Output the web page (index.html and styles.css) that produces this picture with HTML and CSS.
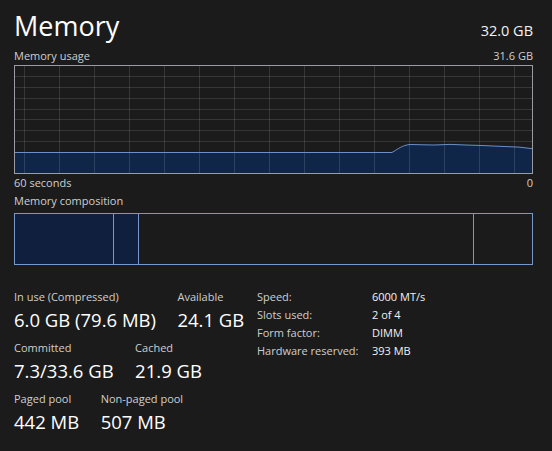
FILE: index.html
```html
<!DOCTYPE html>
<html lang="en">
<head>
<meta charset="utf-8">
<title>Memory</title>
<link rel="stylesheet" href="styles.css">
</head>
<body>
<main class="page">
  <header class="head">
    <h1 class="title">Memory</h1>
    <span class="total">32.0 GB</span>
  </header>

  <div class="caption-row">
    <span>Memory usage</span>
    <span>31.6 GB</span>
  </div>

  <svg class="usage-graph" width="519" height="109" viewBox="0 0 519 109" aria-label="Memory usage graph">
    <path class="fill" d="M0.5,87.5 L378,87.5 C384,84 388,80.3 396,79.5 L420,80 L436,79.4 L452,80 L470,80.6 L490,81.5 L505,82.1 L518.5,83.7 L518.5,108.5 L0.5,108.5 Z"/>
    <g class="grid">
      <path d="M10.5,1V108 M45.5,1V108 M80.5,1V108 M115.5,1V108 M150.5,1V108 M185.5,1V108 M220.5,1V108 M255.5,1V108 M290.5,1V108 M325.5,1V108 M360.5,1V108 M395.5,1V108 M430.5,1V108 M465.5,1V108 M500.5,1V108"/>
      <path d="M1,11.5H518 M1,22.5H518 M1,33.5H518 M1,44.5H518 M1,54.5H518 M1,65.5H518 M1,76.5H518"/>
    </g>
    <path class="line" d="M0.5,87.5 L378,87.5 C384,84 388,80.3 396,79.5 L420,80 L436,79.4 L452,80 L470,80.6 L490,81.5 L505,82.1 L518.5,83.7"/>
    <rect class="frame" x="0.5" y="0.5" width="518" height="108"/>
  </svg>

  <div class="caption-row axis">
    <span>60 seconds</span>
    <span>0</span>
  </div>

  <div class="caption">Memory composition</div>

  <div class="composition">
    <div class="segment used" style="flex-basis: 99px"></div>
    <div class="segment modified" style="flex-basis: 25px"></div>
    <div class="segment standby" style="flex-basis: 335px"></div>
    <div class="segment free"></div>
  </div>

  <section class="details">
    <div class="stats">
      <div class="stat-row">
        <div class="stat">
          <div class="stat-label">In use (Compressed)</div>
          <div class="stat-value">6.0 GB (79.6 MB)</div>
        </div>
        <div class="stat">
          <div class="stat-label">Available</div>
          <div class="stat-value">24.1 GB</div>
        </div>
      </div>
      <div class="stat-row">
        <div class="stat">
          <div class="stat-label">Committed</div>
          <div class="stat-value">7.3/33.6 GB</div>
        </div>
        <div class="stat">
          <div class="stat-label">Cached</div>
          <div class="stat-value">21.9 GB</div>
        </div>
      </div>
      <div class="stat-row">
        <div class="stat">
          <div class="stat-label">Paged pool</div>
          <div class="stat-value">442 MB</div>
        </div>
        <div class="stat">
          <div class="stat-label">Non-paged pool</div>
          <div class="stat-value">507 MB</div>
        </div>
      </div>
    </div>

    <dl class="specs">
      <dt>Speed:</dt><dd>6000 MT/s</dd>
      <dt>Slots used:</dt><dd>2 of 4</dd>
      <dt>Form factor:</dt><dd>DIMM</dd>
      <dt>Hardware reserved:</dt><dd>393 MB</dd>
    </dl>
  </section>
</main>
</body>
</html>
```

FILE: styles.css
```css
html, body {
  margin: 0;
  padding: 0;
  background: #1b1b1b;
}

body {
  font-family: "Open Sans", "Noto Sans", sans-serif;
  color: #ffffff;
  width: 552px;
  height: 451px;
  overflow: hidden;
}

.page {
  padding: 8px 19px 0 14px;
}

.head {
  display: flex;
  justify-content: space-between;
  align-items: baseline;
  line-height: 36px;
  height: 36px;
}

.title {
  margin: 0;
  font-size: 27px;
  font-weight: 400;
  color: #ffffff;
  line-height: 36px;
}

.total {
  font-size: 14.5px;
  color: #f2f2f2;
}

.caption-row {
  display: flex;
  justify-content: space-between;
  margin-top: 5px;
  font-size: 11px;
  line-height: 14px;
  color: #cfcfcf;
}

.caption-row.axis {
  margin-top: 2px;
}

.caption {
  margin-top: 4px;
  font-size: 11px;
  line-height: 14px;
  color: #cfcfcf;
}

.usage-graph {
  display: block;
  margin-top: 2px;
}

.usage-graph .fill {
  fill: #0f2649;
}

.usage-graph .grid path {
  fill: none;
  stroke: rgba(255, 255, 255, 0.12);
  stroke-width: 1;
}

.usage-graph .line {
  fill: none;
  stroke: #6a8fca;
  stroke-width: 1;
}

.usage-graph .frame {
  fill: none;
  stroke: #9a9ca2;
  stroke-width: 1;
}

.composition {
  display: flex;
  box-sizing: border-box;
  height: 52px;
  margin-top: 5px;
  border: 1px solid #7897cc;
}

.segment {
  flex: 0 0 auto;
  box-sizing: border-box;
  border-right: 1px solid #7897cc;
}

.segment.used,
.segment.modified {
  background: #0f1f3d;
}

.segment.free {
  flex: 1 1 auto;
  border-right: 0;
}

.details {
  display: flex;
  margin-top: 24.5px;
}

.stats {
  flex: 0 0 243px;
  display: flex;
  flex-direction: column;
  gap: 9px;
}

.stat-row {
  display: flex;
  gap: 21.5px;
}

.stat-label {
  font-size: 11px;
  line-height: 14px;
  color: #cfcfcf;
}

.stat-value {
  margin-top: 4px;
  font-size: 18.5px;
  line-height: 24px;
  color: #ffffff;
  white-space: nowrap;
}

.specs {
  margin: -2px 0 0;
  display: grid;
  grid-template-columns: 115px auto;
  font-size: 11px;
  line-height: 18px;
  align-content: start;
}

.specs dt {
  color: #cfcfcf;
}

.specs dd {
  margin: 0;
  color: #f2f2f2;
}
```
